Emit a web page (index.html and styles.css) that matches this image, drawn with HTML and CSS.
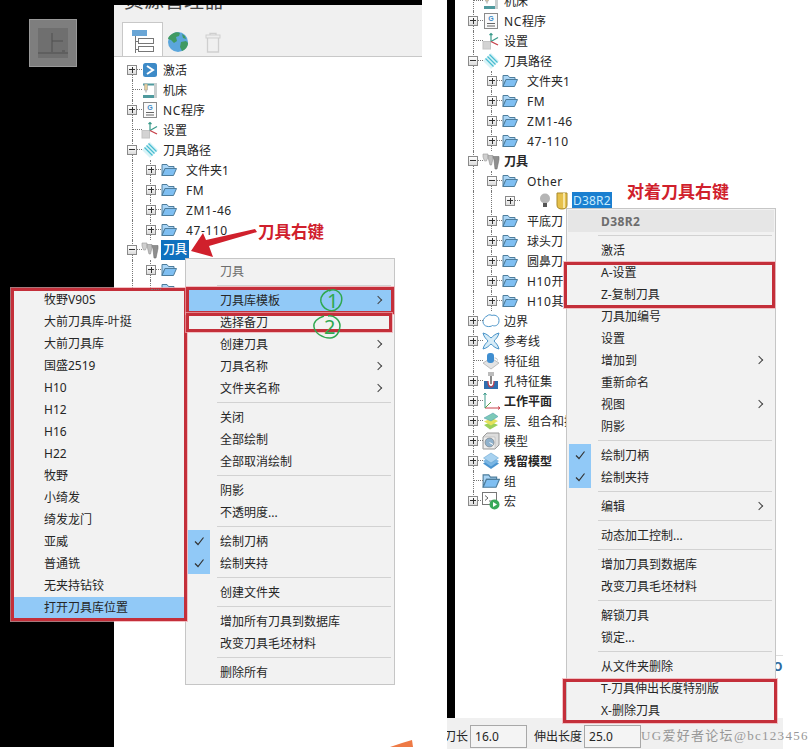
FILE: index.html
```html
<!DOCTYPE html>
<html lang="zh-CN">
<head>
  <meta charset="UTF-8">
  <title>资源管理器</title>
  <link rel="stylesheet" href="styles.css">
</head>
<body>

<!-- icon set -->
<svg class="defs" width="0" height="0">
  <symbol id="i-active" viewBox="0 0 18 18"><rect x="2" y="2" width="14" height="14" rx="2.5" fill="#3d8ac7"/><path d="M6 5l6 4-6 4" fill="none" stroke="#fff" stroke-width="2"/></symbol>
  <symbol id="i-machine" viewBox="0 0 18 18"><rect x="13" y="2" width="3" height="15" fill="#c9cfcf"/><rect x="2" y="2.5" width="11" height="2" fill="#4f9a9e"/><rect x="2" y="14" width="11" height="3" fill="#4f9a9e"/><rect x="3.500" y="3" width="3" height="6" fill="#e3cf9d" stroke="#999" stroke-width=".5"/><path d="M5 9v2.500" stroke="#999"/></symbol>
  <symbol id="i-nc" viewBox="0 0 18 18"><rect x="2.500" y="1.500" width="13" height="15" fill="#fafafa" stroke="#8a8a8a"/><text x="9" y="8.500" font-size="7" font-family="Liberation Sans" font-weight="bold" text-anchor="middle" fill="#3d8ac7">G</text><path d="M5 11.500h8M5 14h8" stroke="#666"/></symbol>
  <symbol id="i-setup" viewBox="0 0 18 18"><rect x="1" y="9.500" width="7.500" height="7.500" fill="#d3d3d3" stroke="#c4c4c4"/><path d="M9 9.500V1.500M7.500 3L9 1.500 10.500 3" fill="none" stroke="#3a9a8a" stroke-width="1.200"/><path d="M9 9.500l7-4" stroke="#3a9a8a" stroke-width="1.200"/><path d="M9 9.500l7 3.500" stroke="#c8404a" stroke-width="1.300"/></symbol>
  <symbol id="i-path" viewBox="0 0 18 18"><path d="M9 1l8 8-8 8-8-8z" fill="#d8f3f7"/><path d="M5.500 4.500l8 8M3.500 6.500l8 8M7.500 2.500l8 8" stroke="#48bcd0" stroke-width="1.200"/></symbol>
  <symbol id="i-folder" viewBox="0 0 16 16"><path d="M1 13.500V2.500h5l1.500 2h5.500v2H4z" fill="#a9d4f5" stroke="#4d7d9c"/><path d="M1 13.500L4 6.500h11.500l-3 7z" fill="#7fbff2" stroke="#4d7d9c"/></symbol>
  <symbol id="i-tools" viewBox="0 0 18 18"><path d="M1 2h5v3L4.500 9h-2L1 5z" fill="#d0d0d0" stroke="#999" stroke-width=".6"/><path d="M6 3.500h5v3L9.500 13H8L6.500 7z" fill="#bdbdbd" stroke="#8f8f8f" stroke-width=".6"/><path d="M11 4.500h6v3L15 17h-2l-1-9z" fill="#8e8e8e" stroke="#707070" stroke-width=".6"/></symbol>
  <symbol id="i-bound" viewBox="0 0 18 18"><path d="M5 4c2-2 4-1 5-.5 2-1 7 0 7 5s-4 6-6.500 5C8 15.500 1 15 1 9.500 1 7 3 5 5 4z" fill="#fff" stroke="#4a94c9"/></symbol>
  <symbol id="i-ref" viewBox="0 0 18 18"><path d="M1 1c4.500 1 6 3.500 8 5 2-1.500 3.500-4 8-5-1 4.500-3.500 6-5 8 1.500 2 4 3.500 5 8-4.500-1-6-3.500-8-5-2 1.500-3.500 4-8 5 1-4.500 3.500-6 5-8C4.500 7 2 5.500 1 1z" fill="#d7ecf7" stroke="#4a94c9"/></symbol>
  <symbol id="i-feature" viewBox="0 0 18 18"><path d="M9 6l8 5-8 6-8-6z" fill="#e3e3e3" stroke="#bdbdbd"/><rect x="5" y="1" width="7" height="10" rx="3" fill="#3f8ed0"/><path d="M12.500 6c2 0 3 1 3 2.500" stroke="#bbb" fill="none"/></symbol>
  <symbol id="i-hole" viewBox="0 0 18 18"><rect x="6" y="0" width="6" height="4" fill="#bbb"/><path d="M8 4h2v8H8z" fill="#888"/><path d="M2 9h4c0 3.500 1 5 3 5s3-1.500 3-5h4v8H2z" fill="#2f6eaf"/><path d="M6 9c0 4.500 1.500 6 3 6s3-1.500 3-6" fill="none" stroke="#c8404a" stroke-width="1.200"/></symbol>
  <symbol id="i-plane" viewBox="0 0 18 18"><path d="M3 1v15" stroke="#3a9a8a"/><path d="M3 16h15" stroke="#c8404a"/><path d="M3 16l6-6" stroke="#5aa04a"/><path d="M1.500 3L3 1l1.500 2" fill="none" stroke="#3a9a8a"/><path d="M16 14.500l2 1.500-2 1.500" fill="none" stroke="#c8404a"/></symbol>
  <symbol id="i-layers" viewBox="0 0 18 18"><path d="M2 13l7-3 7 3-8 4.500z" fill="#9ad05a"/><path d="M2 9.500L10 6l6 3-7 4.500z" fill="#e4e25a"/><path d="M2 6l9-5 5 3.500-7 4.500z" fill="#7cc9b8" stroke="#4a94a9" stroke-width=".5"/></symbol>
  <symbol id="i-model" viewBox="0 0 18 18"><path d="M1 5l4-4h12v12l-4 4H1z" fill="#ddd" stroke="#999"/><rect x="1.500" y="5" width="11.500" height="11.500" fill="#eee" stroke="#aaa" stroke-width=".5"/><circle cx="7.500" cy="10.500" r="4.500" fill="#8fb1cc" stroke="#777" stroke-width=".6"/><path d="M7.500 10.500l3.500 2" stroke="#fff"/></symbol>
  <symbol id="i-stock" viewBox="0 0 18 18"><path d="M9 6l8 5.500L9 17l-8-5.500z" fill="#4a94cf"/><path d="M9 4l8 5-8 5.500L1 9z" fill="#7ab6e4"/><path d="M9 1l7.500 5L9 11 1.500 6z" fill="#a8d2f0" stroke="#5b9bc9" stroke-width=".5"/></symbol>
  <symbol id="i-macro" viewBox="0 0 18 18"><rect x=".5" y=".5" width="14" height="12" fill="#fff" stroke="#777"/><path d="M3 3.500l3 2.500-3 2.500M7 9h4" fill="none" stroke="#666"/><circle cx="12.500" cy="12.500" r="5" fill="#3aa85a"/><path d="M11 10l4 2.500-4 2.500z" fill="#fff"/></symbol>
  <symbol id="i-tree" viewBox="0 0 24 24"><rect x="1" y="1" width="15" height="6" fill="#6aa6d6"/><path d="M4.500 7v17" stroke="#777" fill="none"/><path d="M4.500 12.500h3M4.500 20.500h3" stroke="#777"/><rect x="7.500" y="9.500" width="15" height="5" fill="#fff" stroke="#777"/><rect x="7.500" y="17.500" width="15" height="5" fill="#fff" stroke="#777"/></symbol>
  <symbol id="i-globe" viewBox="0 0 22 22"><circle cx="11" cy="11" r="10" fill="#5ba6dc"/><path d="M5 3c3-2 6-2 8-1l-1 3-3 1 1 4-3 2-3-3-3-1c0-2 2-4 4-5zM14 11l5-1 2 2c0 4-3 7-6 8l-2-4zM15 3l3 2 1 3-3-1z" fill="#3f9a62"/></symbol>
  <symbol id="i-trash" viewBox="0 0 16 21"><path d="M1 4.500h14M5 4.500V1.500h6v3M2.500 4.500V20h11V4.500" fill="none" stroke="#cfcfcf" stroke-width="1.300"/><rect x="1" y="3" width="14" height="3" fill="#eee" stroke="#cfcfcf"/></symbol>
  <symbol id="i-check" viewBox="0 0 12 12"><path d="M2 6.500l3 3 5.500-7" fill="none" stroke="#333" stroke-width="1.200"/></symbol>
</svg>

<div class="stage">

  <!-- left screenshot -->
  <section class="shot shot-a">
    <div class="dark-side">
      <div class="ghost-btn">
        <svg width="30" height="30" viewBox="0 0 30 30"><path d="M14 5v19M14 13h11M24 23h3M0 25h30" fill="none" stroke="#505050"/></svg>
      </div>
    </div>
    <div class="panel">
      <div class="panel-head">
        <div class="panel-title">资源管理器</div>
        <div class="tabs">
          <div class="tab active"><svg width="24" height="24"><use href="#i-tree"/></svg></div>
          <div class="tab"><svg width="22" height="22"><use href="#i-globe"/></svg></div>
          <div class="tab tab-trash"><svg width="16" height="21"><use href="#i-trash"/></svg></div>
        </div>
      </div>
      <div class="tree">
        <div class="row top"><i class="tog plus"></i><svg class="ic"><use href="#i-active"/></svg><span>激活</span></div>
        <div class="row"><i class="tog none"></i><svg class="ic"><use href="#i-machine"/></svg><span>机床</span></div>
        <div class="row"><i class="tog plus"></i><svg class="ic"><use href="#i-nc"/></svg><span><b class="en">NC</b>程序</span></div>
        <div class="row"><i class="tog none"></i><svg class="ic"><use href="#i-setup"/></svg><span>设置</span></div>
        <div class="row"><i class="tog minus"></i><svg class="ic"><use href="#i-path"/></svg><span>刀具路径</span></div>
        <div class="row lv1"><i class="tog plus"></i><svg class="ic"><use href="#i-folder"/></svg><span>文件夹<b class="en">1</b></span></div>
        <div class="row lv1"><i class="tog plus"></i><svg class="ic"><use href="#i-folder"/></svg><span class="en">FM</span></div>
        <div class="row lv1"><i class="tog plus"></i><svg class="ic"><use href="#i-folder"/></svg><span class="en">ZM1-46</span></div>
        <div class="row lv1"><i class="tog plus"></i><svg class="ic"><use href="#i-folder"/></svg><span class="en">47-110</span></div>
        <div class="row"><i class="tog minus"></i><svg class="ic"><use href="#i-tools"/></svg><span class="sel">刀具</span></div>
        <div class="row lv1"><i class="tog plus"></i><svg class="ic"><use href="#i-folder"/></svg></div>
        <div class="row lv1"><i class="tog none"></i><svg class="ic"><use href="#i-folder"/></svg></div>
      </div>
    </div>
  </section>

  <!-- right screenshot -->
  <section class="shot shot-b">
    <div class="shot-b-main">
      <div class="dark-strip"></div>
      <div class="panel">
        <div class="tree tree-cut">
          <div class="row"><i class="tog none"></i><svg class="ic"><use href="#i-machine"/></svg><span>机床</span></div>
          <div class="row"><i class="tog plus"></i><svg class="ic"><use href="#i-nc"/></svg><span><b class="en">NC</b>程序</span></div>
          <div class="row"><i class="tog none"></i><svg class="ic"><use href="#i-setup"/></svg><span>设置</span></div>
          <div class="row"><i class="tog minus"></i><svg class="ic"><use href="#i-path"/></svg><span>刀具路径</span></div>
          <div class="row lv1"><i class="tog plus"></i><svg class="ic"><use href="#i-folder"/></svg><span>文件夹<b class="en">1</b></span></div>
          <div class="row lv1"><i class="tog plus"></i><svg class="ic"><use href="#i-folder"/></svg><span class="en">FM</span></div>
          <div class="row lv1"><i class="tog plus"></i><svg class="ic"><use href="#i-folder"/></svg><span class="en">ZM1-46</span></div>
          <div class="row lv1"><i class="tog plus"></i><svg class="ic"><use href="#i-folder"/></svg><span class="en">47-110</span></div>
          <div class="row"><i class="tog minus"></i><svg class="ic"><use href="#i-tools"/></svg><span class="strong">刀具</span></div>
          <div class="row lv1"><i class="tog minus"></i><svg class="ic"><use href="#i-folder"/></svg><span class="en">Other</span></div>
          <div class="row lv1 lv2"><i class="tog plus"></i>
            <svg class="bulb" width="12" height="16" viewBox="0 0 12 16"><circle cx="6" cy="5.500" r="5" fill="#b5b5b5"/><rect x="4" y="10" width="4" height="4" fill="#555"/></svg>
            <svg class="mill" width="12" height="18" viewBox="0 0 12 18"><path d="M1 1h10v12c0 3-2 4-5 4s-5-1-5-4z" fill="#e6c04a" stroke="#a98a2a"/><path d="M8 1v15" stroke="#f7e6a5" stroke-width="2"/></svg>
            <span class="sel sel-tool">D38R2</span></div>
          <div class="row lv1"><i class="tog plus"></i><svg class="ic"><use href="#i-folder"/></svg><span>平底刀</span></div>
          <div class="row lv1"><i class="tog plus"></i><svg class="ic"><use href="#i-folder"/></svg><span>球头刀</span></div>
          <div class="row lv1"><i class="tog plus"></i><svg class="ic"><use href="#i-folder"/></svg><span>圆鼻刀</span></div>
          <div class="row lv1"><i class="tog plus"></i><svg class="ic"><use href="#i-folder"/></svg><span><b class="en">H10</b>开粗</span></div>
          <div class="row lv1"><i class="tog plus"></i><svg class="ic"><use href="#i-folder"/></svg><span><b class="en">H10</b>其他</span></div>
          <div class="row"><i class="tog plus"></i><svg class="ic"><use href="#i-bound"/></svg><span>边界</span></div>
          <div class="row"><i class="tog plus"></i><svg class="ic"><use href="#i-ref"/></svg><span>参考线</span></div>
          <div class="row"><i class="tog none"></i><svg class="ic"><use href="#i-feature"/></svg><span>特征组</span></div>
          <div class="row"><i class="tog plus"></i><svg class="ic"><use href="#i-hole"/></svg><span>孔特征集</span></div>
          <div class="row"><i class="tog plus"></i><svg class="ic"><use href="#i-plane"/></svg><span class="strong">工作平面</span></div>
          <div class="row"><i class="tog plus"></i><svg class="ic"><use href="#i-layers"/></svg><span>层、组合和接</span></div>
          <div class="row"><i class="tog plus"></i><svg class="ic"><use href="#i-model"/></svg><span>模型</span></div>
          <div class="row"><i class="tog plus"></i><svg class="ic"><use href="#i-stock"/></svg><span class="strong">残留模型</span></div>
          <div class="row"><i class="tog none"></i><svg class="ic"><use href="#i-folder"/></svg><span>组</span></div>
          <div class="row last"><i class="tog plus"></i><svg class="ic"><use href="#i-macro"/></svg><span>宏</span></div>
        </div>
      </div>
    </div>
    <div class="len-bar">
      <span class="len-first">刀长</span><span class="len-input">16.0</span>
      <span class="len-second">伸出长度</span><span class="len-input">25.0</span>
    </div>
  </section>

  <!-- menu: tools folder -->
  <div class="menu menu-tools">
    <div class="mi title"><span>刀具</span></div>
    <div class="sep"></div>
    <div class="mi hover"><span>刀具库模板</span><em class="more"></em></div>
    <div class="mi"><span>选择备刀</span></div>
    <div class="mi"><span>创建刀具</span><em class="more"></em></div>
    <div class="mi"><span>刀具名称</span><em class="more"></em></div>
    <div class="mi"><span>文件夹名称</span><em class="more"></em></div>
    <div class="sep"></div>
    <div class="mi"><span>关闭</span></div>
    <div class="mi"><span>全部绘制</span></div>
    <div class="mi"><span>全部取消绘制</span></div>
    <div class="sep"></div>
    <div class="mi"><span>阴影</span></div>
    <div class="mi"><span>不透明度...</span></div>
    <div class="sep"></div>
    <div class="mi on"><svg class="tick" width="12" height="12"><use href="#i-check"/></svg><span>绘制刀柄</span></div>
    <div class="mi on"><svg class="tick" width="12" height="12"><use href="#i-check"/></svg><span>绘制夹持</span></div>
    <div class="sep"></div>
    <div class="mi"><span>创建文件夹</span></div>
    <div class="sep"></div>
    <div class="mi"><span>增加所有刀具到数据库</span></div>
    <div class="mi"><span>改变刀具毛坯材料</span></div>
    <div class="sep"></div>
    <div class="mi"><span>删除所有</span></div>
  </div>

  <!-- submenu: templates -->
  <div class="submenu">
    <div class="si">牧野V90S</div>
    <div class="si">大前刀具库-叶挺</div>
    <div class="si">大前刀具库</div>
    <div class="si">国盛2519</div>
    <div class="si">H10</div>
    <div class="si">H12</div>
    <div class="si">H16</div>
    <div class="si">H22</div>
    <div class="si">牧野</div>
    <div class="si">小绮发</div>
    <div class="si">绮发龙门</div>
    <div class="si">亚威</div>
    <div class="si">普通铣</div>
    <div class="si">无夹持钻铰</div>
    <div class="si hover">打开刀具库位置</div>
  </div>

  <!-- menu: single tool -->
  <div class="menu menu-tool">
    <div class="mi title title-box"><span>D38R2</span></div>
    <div class="sep"></div>
    <div class="mi"><span>激活</span></div>
    <div class="mi"><span>A-设置</span></div>
    <div class="mi"><span>Z-复制刀具</span></div>
    <div class="mi"><span>刀具加编号</span></div>
    <div class="mi"><span>设置</span></div>
    <div class="mi"><span>增加到</span><em class="more"></em></div>
    <div class="mi"><span>重新命名</span></div>
    <div class="mi"><span>视图</span><em class="more"></em></div>
    <div class="mi"><span>阴影</span></div>
    <div class="sep"></div>
    <div class="mi on"><svg class="tick" width="12" height="12"><use href="#i-check"/></svg><span>绘制刀柄</span></div>
    <div class="mi on"><svg class="tick" width="12" height="12"><use href="#i-check"/></svg><span>绘制夹持</span></div>
    <div class="sep"></div>
    <div class="mi"><span>编辑</span><em class="more"></em></div>
    <div class="sep"></div>
    <div class="mi"><span>动态加工控制...</span></div>
    <div class="sep"></div>
    <div class="mi"><span>增加刀具到数据库</span></div>
    <div class="mi"><span>改变刀具毛坯材料</span></div>
    <div class="sep"></div>
    <div class="mi"><span>解锁刀具</span></div>
    <div class="mi"><span>锁定...</span></div>
    <div class="sep"></div>
    <div class="mi"><span>从文件夹删除</span></div>
    <div class="mi"><span>T-刀具伸出长度特别版</span></div>
    <div class="mi"><span>X-删除刀具</span></div>
  </div>

  <!-- annotations drawn over the screenshots -->
  <div class="note note-a">刀具右键</div>
  <div class="note note-b">对着刀具右键</div>
  <svg class="arrow" width="70" height="34" viewBox="0 0 70 34">
    <path d="M67 2L69 5 21 19 25 30 3 24 15 6 18 13z" fill="#d0202c"/>
  </svg>
  <div class="mark mark-1"></div>
  <div class="mark mark-2"></div>
  <div class="mark mark-3"></div>
  <div class="mark mark-4"></div>
  <div class="mark mark-5"></div>
  <svg class="scrawl scrawl-1" width="26" height="26" viewBox="0 0 26 26">
    <path d="M10 2C4 5 1 9 2 14c2 7 9 10 14 8 6-3 8-10 6-15-2-4-7-7-12-4" fill="none" stroke="#2fa84f" stroke-width="1.500"/>
  </svg>
  <div class="scrawl-num num-1">1</div>
  <svg class="scrawl scrawl-2" width="30" height="26" viewBox="0 0 30 26">
    <path d="M12 2C6 4 1 8 2 13c1 6 8 11 16 11 6 0 10-6 10-12 0-6-6-11-12-10" fill="none" stroke="#2fa84f" stroke-width="1.500"/>
  </svg>
  <div class="scrawl-num num-2">2</div>
  <svg class="orange" width="24" height="7" viewBox="0 0 24 7">
    <path d="M0 7L12 3 22 0l1 7z" fill="#ee7a45"/>
  </svg>
  <div class="peek">O</div>
  <div class="watermark">UG爱好者论坛@bc123456</div>
</div>

</body>
</html>
```

FILE: styles.css
```css
* {
  box-sizing: border-box;
}
html, body {
  margin: 0;
  background: #fff;
}
body {
  font-family: "Noto Sans", "Noto Sans CJK SC", sans-serif;
  font-size: 12px;
  color: #262626;
}
.defs {
  position: absolute;
}
.stage {
  position: relative;
  display: flex;
  gap: 25px;
  width: 812px;
  height: 749px;
  overflow: hidden;
  background: #fff;
}

/* screenshots */
.shot-a {
  display: flex;
  flex: none;
  width: 422px;
  height: 747px;
  padding-top: 5px;
  background: #000;
}
.dark-side {
  flex: none;
  width: 114px;
  padding: 14px 0 0 29px;
}
.ghost-btn {
  display: flex;
  align-items: center;
  justify-content: center;
  width: 48px;
  height: 48px;
  background: #7e7e7e;
  border: 1px solid #999;
}
.ghost-btn svg {
  background: #6f6f6f;
}
.panel {
  flex: 1;
  min-width: 0;
  overflow: hidden;
  background: #fff;
}
.panel-head {
  height: 52px;
  overflow: hidden;
  background: #f0f0f0;
  border-bottom: 1px solid #c8c8c8;
}
.panel-title {
  height: 18px;
  margin: -13px 0 12px;
  padding-left: 10px;
  font-size: 20px;
  line-height: 18px;
  color: #444;
}
.tabs {
  display: flex;
  align-items: flex-start;
  height: 35px;
  padding-left: 8px;
}
.tab {
  display: flex;
  align-items: center;
  justify-content: center;
  height: 35px;
  padding: 5px 4px 0;
}
.tab.active {
  width: 41px;
  padding: 1px 0 0 1px;
  background: #fff;
  border: 1px solid #c8c8c8;
  border-bottom: none;
}
.tab-trash {
  margin-left: 8px;
}
.shot-b {
  flex: none;
  width: 336px;
}
.shot-b-main {
  display: flex;
  height: 718px;
}
.dark-strip {
  flex: none;
  width: 8px;
  background: #000;
}
.len-bar {
  display: flex;
  align-items: center;
  height: 31px;
  padding-top: 5px;
  overflow: hidden;
  background: #f0f0f0;
}
.len-first {
  margin-left: -3px;
  margin-right: 2px;
}
.len-second {
  margin: 0 2px 0 7px;
}
.len-input {
  width: 57px;
  height: 23px;
  padding-left: 4px;
  line-height: 21px;
  background: #f4f4f4;
  border: 1px solid #a8a8a8;
}

/* tree */
.tree {
  padding-top: 3px;
}
.tree-cut {
  margin-top: -9px;
  padding-top: 0;
}
.row {
  position: relative;
  display: flex;
  align-items: center;
  height: 20px;
  padding-left: 13px;
  white-space: nowrap;
}
.row::before,
.lv1::after {
  content: "";
  position: absolute;
  top: 0;
  bottom: 0;
  left: 18px;
  border-left: 1px dotted #777;
}
.lv1::after {
  left: 36px;
}
.row.top::before {
  top: 10px;
}
.row.last::before {
  bottom: 10px;
}
.lv1 {
  padding-left: 32px;
}
.lv2 {
  padding-left: 50px;
}
.tog {
  position: relative;
  z-index: 1;
  flex: none;
  width: 10px;
  height: 10px;
  margin-right: 5px;
  border: 1px solid #8a8a8a;
  background: linear-gradient(#fff, #dcdcdc);
}
.tog::before {
  content: "";
  position: absolute;
  top: 3px;
  left: 1px;
  width: 6px;
  height: 2px;
  border-top: 1px solid #333;
}
.tog::after {
  content: "";
  position: absolute;
  top: 3px;
  left: 9px;
  width: 5px;
  border-top: 1px dotted #777;
}
.tog.plus {
  background-image: linear-gradient(#333, #333), linear-gradient(#fff, #dcdcdc);
  background-size: 1px 6px, auto;
  background-repeat: no-repeat;
  background-position: center, 0 0;
}
.tog.none {
  border-color: transparent;
  background: none;
}
.tog.none::before {
  display: none;
}
.tog.none::after {
  left: 4px;
  width: 10px;
}
.ic {
  flex: none;
  width: 18px;
  height: 18px;
  margin: 0 4px 0 -1px;
}
.lv1 .ic {
  width: 16px;
  height: 16px;
  margin: 0 9px 0 0;
}
.en {
  font-weight: normal;
  letter-spacing: .6px;
}
.strong {
  font-weight: 700;
}
.sel {
  margin-left: -2px;
  padding: 0 2px;
  line-height: 20px;
  font-weight: 500;
  color: #fff;
  background: #0f71be;
}
.bulb {
  flex: none;
  margin: 0 5px 0 19px;
}
.mill {
  flex: none;
  margin-right: 4px;
}
.sel-tool {
  margin-left: 0;
  padding: 0 1px;
  line-height: 18px;
  font-weight: 400;
  letter-spacing: .2px;
  color: #c8ecff;
  background: #1a7fd0;
}

/* context menus */
.menu {
  position: absolute;
  width: 210px;
  padding: 1px;
  background: #f2f2f2;
  border: 1px solid #c6c6c6;
}
.menu-tools {
  top: 258px;
  left: 185px;
}
.menu-tool {
  top: 208px;
  left: 566px;
}
.mi {
  position: relative;
  display: flex;
  align-items: center;
  height: 22px;
  padding: 0 12px 0 33px;
  white-space: nowrap;
}
.mi.hover {
  background: #91c9f7;
}
.mi.on::before {
  content: "";
  position: absolute;
  top: 0;
  bottom: 0;
  left: 1px;
  width: 22px;
  background: #91c9f7;
}
.tick {
  position: absolute;
  z-index: 1;
  left: 6px;
  top: 5px;
}
.more {
  width: 6px;
  height: 6px;
  margin-left: auto;
  border-top: 1px solid #444;
  border-right: 1px solid #444;
  transform: rotate(45deg);
}
.title {
  color: #6d6d6d;
}
.title-box {
  font-weight: 700;
  letter-spacing: .4px;
  background: #e6e6e6;
}
.sep {
  height: 1px;
  margin: 3px 2px 3px 30px;
  background: #d2d2d2;
}
.submenu {
  position: absolute;
  top: 289px;
  left: 14px;
  width: 170px;
  background: #f2f2f2;
}
.si {
  height: 22px;
  padding-left: 30px;
  line-height: 22px;
}
.si.hover {
  background: #91c9f7;
}

/* annotations */
.mark {
  position: absolute;
  border: 3px solid #c42f3a;
  box-shadow: 0 0 0 1px rgba(240, 170, 175, .7);
}
.mark-1 {
  top: 288px;
  left: 11px;
  width: 176px;
  height: 333px;
}
.mark-2 {
  top: 287px;
  left: 186px;
  width: 208px;
  height: 27px;
}
.mark-3 {
  top: 313px;
  left: 186px;
  width: 206px;
  height: 19px;
}
.mark-4 {
  top: 262px;
  left: 564px;
  width: 211px;
  height: 46px;
}
.mark-5 {
  top: 679px;
  left: 563px;
  width: 214px;
  height: 44px;
}
.note {
  position: absolute;
  font-weight: 700;
  color: #d0202c;
  text-shadow: 0 0 2px #fff;
  white-space: nowrap;
}
.note-a {
  top: 220px;
  left: 258px;
  font-size: 16.500px;
  line-height: 24px;
}
.note-b {
  top: 180px;
  left: 627px;
  font-size: 17px;
  line-height: 24px;
}
.arrow {
  position: absolute;
  top: 227px;
  left: 188px;
}
.scrawl {
  position: absolute;
}
.scrawl-1 {
  top: 288px;
  left: 319px;
}
.scrawl-2 {
  top: 314px;
  left: 312px;
}
.scrawl-num {
  position: absolute;
  color: #2fa84f;
  font-size: 20px;
  line-height: 22px;
}
.num-1 {
  top: 290px;
  left: 327px;
}
.num-2 {
  top: 316px;
  left: 324px;
}
.orange {
  position: absolute;
  top: 740px;
  left: 390px;
}
.peek {
  position: absolute;
  top: 655px;
  left: 776px;
  width: 7px;
  height: 25px;
  overflow: hidden;
  border-top: 1px solid #ddd;
  font-weight: 700;
  line-height: 22px;
  color: #2d6a9f;
  text-indent: -3px;
}
.watermark {
  position: absolute;
  top: 725px;
  left: 641px;
  font-family: "Liberation Serif", "Noto Sans CJK SC", serif;
  font-size: 13px;
  line-height: 22px;
  letter-spacing: 1.300px;
  color: #979797;
  white-space: nowrap;
}
```
